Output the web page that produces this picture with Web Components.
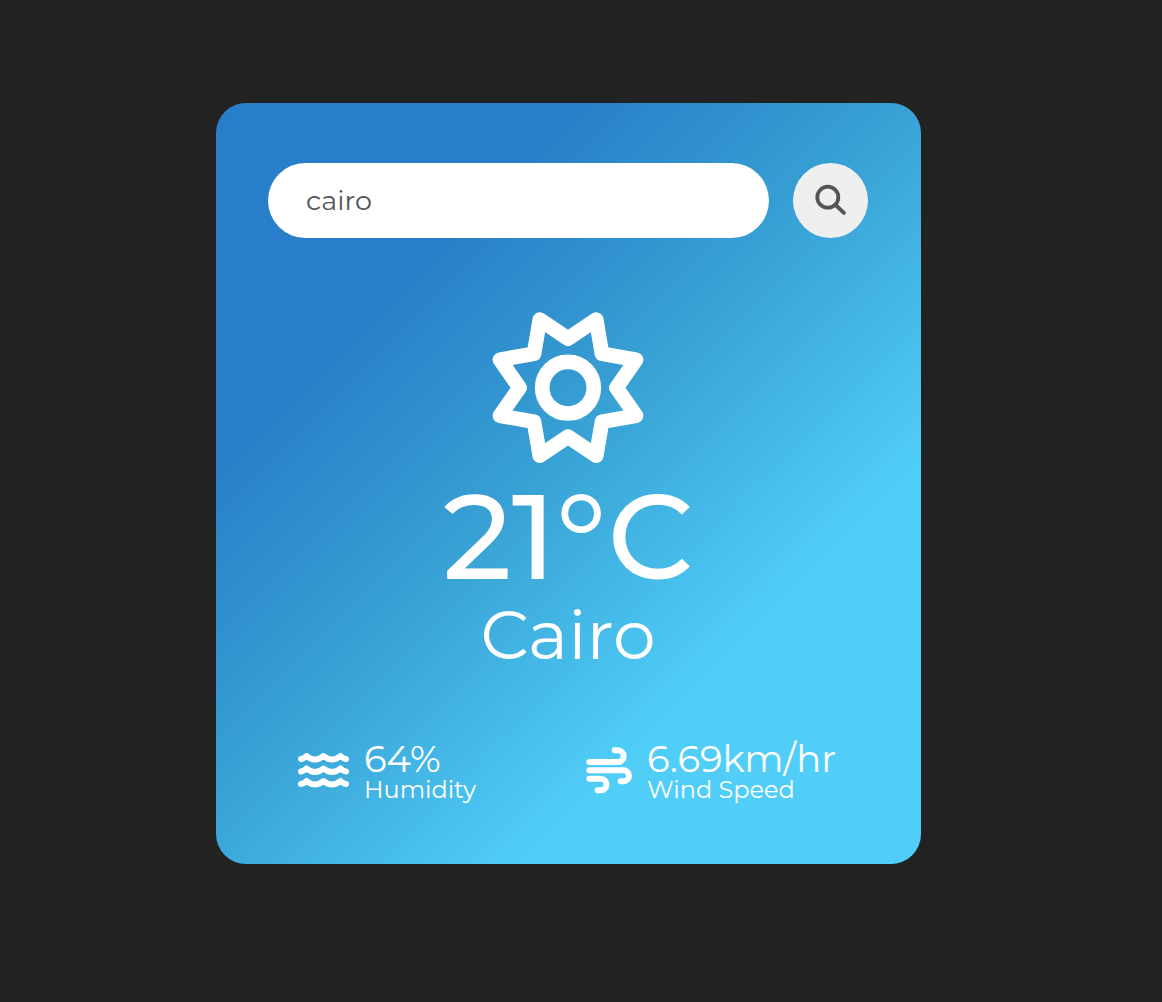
<!DOCTYPE html>
<html lang="en">
<head>
<meta charset="utf-8">
<title>Weather</title>
<style>
html { min-height: 100%; background: #222; }
body { margin: 0; font-family: Montserrat, Inter, "Liberation Sans", sans-serif; color: #fff; }
</style>
</head>
<body>
<weather-app></weather-app>

<template id="app-template">
<style>
:host { display: block; padding: 103px 25px 103px 0; }
main {
  box-sizing: border-box; width: 100%; max-width: 705px; margin: 0 auto; padding: 60px 53px 62px 52px;
  border-radius: 30px;
  background: linear-gradient(135deg, #287ec8 24%, #379fd3 46%, #50cef8 73%);
}
</style>
<main>
  <weather-search value="cairo"></weather-search>
  <weather-now temp="21°C" city="Cairo"></weather-now>
  <weather-details></weather-details>
</main>
</template>

<template id="search-template">
<style>
:host { display: block; }
form { display: flex; gap: 24px; margin: 0; }
input {
  flex: 1; min-width: 0; height: 75px; box-sizing: border-box; border: 0; outline: 0;
  padding: 0 38px; border-radius: 38px; background: #fff; color: #555;
  font: 400 27px/40px Montserrat, Inter, sans-serif;
}
button {
  width: 75px; height: 75px; flex: none; display: grid; place-items: center;
  padding: 0; border: 0; border-radius: 50%; background: #efefef; color: #555;
}
svg { display: block; width: 34px; height: 34px; }
</style>
<form>
  <input type="text" aria-label="City" spellcheck="false">
  <button type="button" aria-label="Search">
    <svg viewBox="0 0 34 34" fill="none" stroke="currentColor" stroke-width="3.8" stroke-linecap="round" aria-hidden="true"><circle cx="13.8" cy="13.2" r="10.5"/><path d="M21.600 21l8.300 7.900"/></svg>
  </button>
</form>
</template>

<template id="now-template">
<style>
:host { display: flex; flex-direction: column; align-items: center; padding-top: 74px; }
svg { display: block; width: 152px; height: 152px; margin-bottom: 12px; }
h1 { margin: 0; font-size: 120px; line-height: 120px; font-weight: 500; }
h2 { margin: 0; font-size: 68px; line-height: 78px; font-weight: 400; }
</style>
<svg viewBox="0 0 152 152" fill="none" stroke="#fff" stroke-width="14.7" stroke-linejoin="round" aria-hidden="true">
  <path d="M76 26.700 104.200 7.700 110 41.700 144 47.700 124.500 75.700 144 103.700 110 109.700 104.200 143.700 76 124.700 47.800 143.700 42 109.700 8 103.700 27.500 75.700 8 47.700 42 41.700 47.800 7.700Z"/>
  <circle cx="76" cy="75.7" r="25.8"/>
</svg>
<h1></h1>
<h2></h2>
</template>

<template id="details-template">
<style>
:host { display: flex; justify-content: space-between; padding: 66px 32px 0 30px; }
svg { display: block; margin-bottom: 2px; fill: none; stroke: #fff; stroke-linecap: round; stroke-linejoin: round; }
</style>
<weather-stat label="Humidity" value="64%">
  <svg width="51" height="35" viewBox="0 0 51 35" stroke-width="6" aria-hidden="true">
    <path d="M3 6q3-.5 5.500-3q8.500 7 17 0q8.500 7 17 0q2.500 2.500 5.500 3M3 18.500q3-.5 5.500-3q8.500 7 17 0q8.500 7 17 0q2.500 2.500 5.500 3M3 31q3-.5 5.500-3q8.500 7 17 0q8.500 7 17 0q2.500 2.500 5.500 3"/>
  </svg>
</weather-stat>
<weather-stat label="Wind Speed" value="6.69km/hr">
  <svg width="46" height="47" viewBox="33 50 138 141" stroke-width="18" aria-hidden="true">
    <path d="M43 95H128.500a17.500 17.500 0 0 0 0-35H119M43 120H145.500a16.500 16.500 0 0 1 0 33H137M43 145H77a17.500 17.500 0 0 1 0 35H68"/>
  </svg>
</weather-stat>
</template>

<template id="stat-template">
<style>
:host { display: flex; align-items: center; gap: 15px; }
p { margin: 0; font-size: 37px; line-height: 38px; font-weight: 400; }
span { display: block; font-size: 24px; line-height: 24px; }
</style>
<slot></slot>
<div><p></p><span></span></div>
</template>

<script>
function stamp(host, id) {
  const root = host.attachShadow({ mode: "open" });
  root.append(document.getElementById(id).content.cloneNode(true));
  return root;
}
customElements.define("weather-stat", class extends HTMLElement {
  connectedCallback() {
    const root = stamp(this, "stat-template");
    root.querySelector("p").textContent = this.getAttribute("value");
    root.querySelector("span").textContent = this.getAttribute("label");
  }
});
customElements.define("weather-details", class extends HTMLElement {
  connectedCallback() { stamp(this, "details-template"); }
});
customElements.define("weather-now", class extends HTMLElement {
  connectedCallback() {
    const root = stamp(this, "now-template");
    root.querySelector("h1").textContent = this.getAttribute("temp");
    root.querySelector("h2").textContent = this.getAttribute("city");
  }
});
customElements.define("weather-search", class extends HTMLElement {
  connectedCallback() {
    stamp(this, "search-template").querySelector("input").value = this.getAttribute("value");
  }
});
customElements.define("weather-app", class extends HTMLElement {
  connectedCallback() { stamp(this, "app-template"); }
});
</script>
</body>
</html>
